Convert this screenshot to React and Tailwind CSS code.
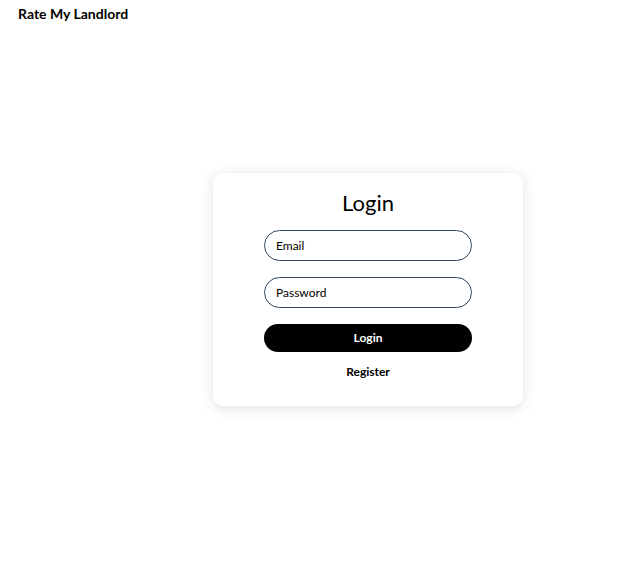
export default function App() {
  return (
    <div className="min-h-screen bg-white text-black" style={{ fontFamily: 'Lato, "Noto Sans", sans-serif' }}>
      <header className="px-[18px] pt-[4px] h-[30px]">
        <h1 className="text-[14px] leading-[20px] font-bold">Rate My Landlord</h1>
      </header>
      <main className="flex justify-center pl-[106px] pt-[143px]">
        <div className="w-[310px] h-[233px] rounded-[10px] bg-white shadow-[0_2px_14px_rgba(0,0,0,0.13)] flex flex-col items-center pt-[15px]">
          <h2 className="text-[22px] leading-[30px] font-normal">Login</h2>
          <form className="w-[208px] flex flex-col mt-[12px]" onSubmit={(e) => e.preventDefault()}>
            <input
              type="email"
              placeholder="Email"
              className="h-[31px] rounded-full border-[1.5px] border-[#34465b] px-[11px] text-[12px] placeholder:text-black outline-none"
            />
            <input
              type="password"
              placeholder="Password"
              className="mt-[16px] h-[31px] rounded-full border-[1.5px] border-[#34465b] px-[11px] text-[12px] placeholder:text-black outline-none"
            />
            <button type="submit" className="mt-[16px] h-[28px] rounded-full bg-black text-white text-[12px] font-bold">
              Login
            </button>
          </form>
          <button className="mt-[12px] text-[12px] font-bold leading-[16px]">Register</button>
        </div>
      </main>
    </div>
  );
}
